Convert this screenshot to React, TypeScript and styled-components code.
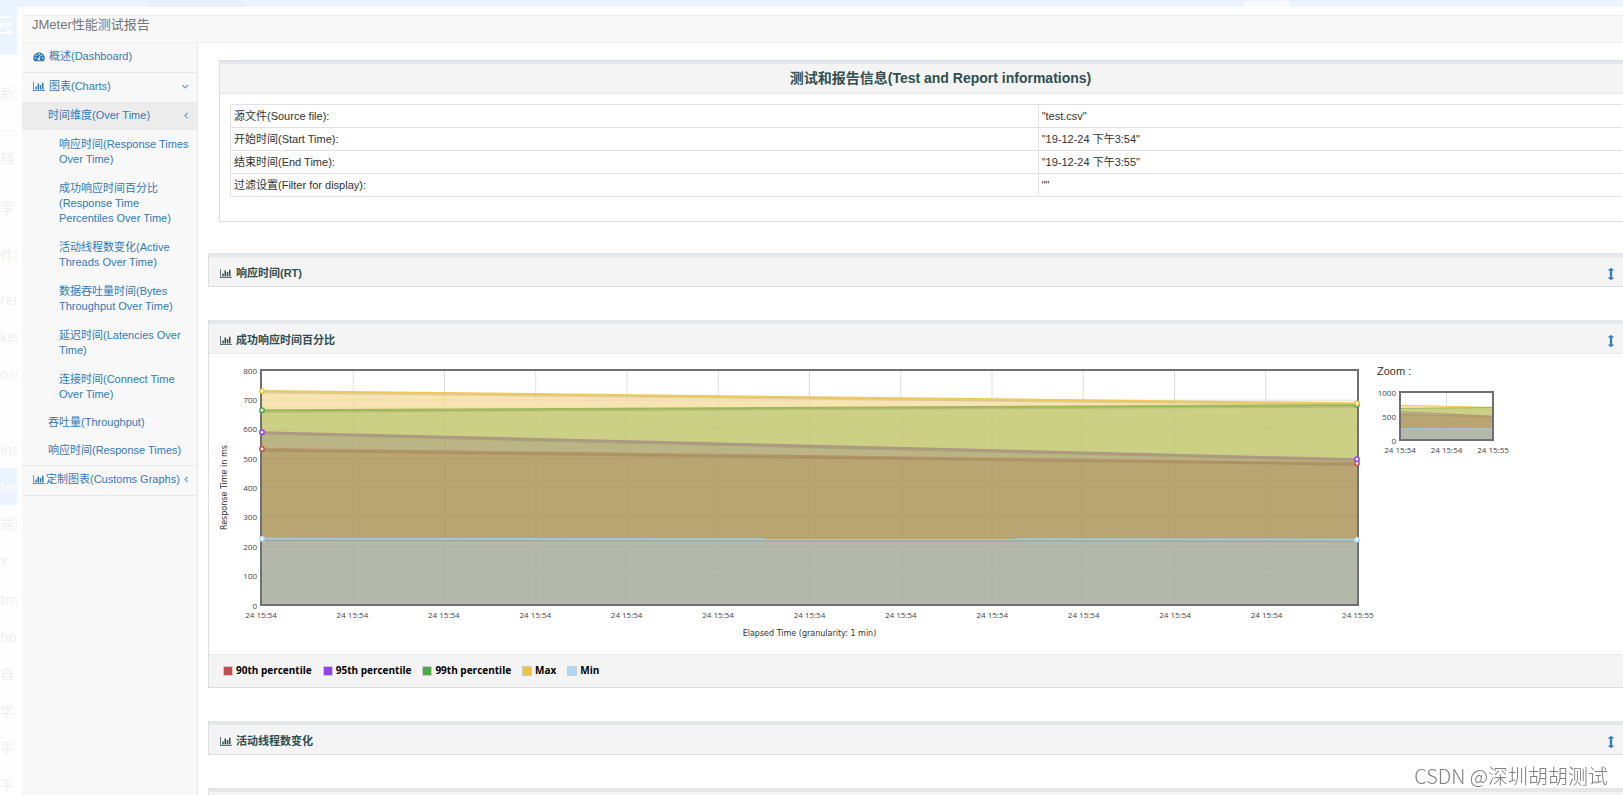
import React from "react";
import styled, { createGlobalStyle, css } from "styled-components";

const sans = `"Liberation Sans", "Noto Sans CJK SC", sans-serif`;
const small = `"Open Sans", "Noto Sans CJK SC", sans-serif`;

const GlobalStyle = createGlobalStyle`
  * { box-sizing: border-box; }
  html, body, #root { height: 100%; }
  body {
    margin: 0;
    overflow: hidden;
    background: #fefefe;
    font-family: ${sans};
    font-size: 11px;
    line-height: 15px;
    color: #333;
  }
`;

/* ---------- page frame ---------- */

const Page = styled.div`
  display: grid;
  grid-template-columns: 17px minmax(0, 1fr);
  grid-template-rows: 7px minmax(0, 1fr);
  height: 100vh;
  overflow: hidden;
`;

const TopStrip = styled.div`
  grid-column: 1 / -1;
  display: flex;
  justify-content: space-between;
  align-items: flex-end;
  padding: 0 332px 0 148px;
  background: #ebf4fe;
`;

const StripShade = styled.span`
  width: 95px;
  height: 7px;
  background: #e8f0fa;
`;

const StripTab = styled.span`
  width: 47px;
  height: 6px;
  border-radius: 6px 6px 0 0;
  background: #fafbfd;
`;

const Gutter = styled.nav`
  overflow: hidden;
  background: #fefefe;
  font-family: ${small};
  color: #eee;
`;

const GutterBrand = styled.div`
  height: 48px;
  overflow: hidden;
  background: #ebf4fe;
  color: #fff;
  font-size: 22px;
  line-height: 34px;
  text-indent: -8px;
`;

const GutterItem = styled.div<{ $height?: number; $active?: boolean }>`
  display: flex;
  align-items: center;
  height: ${(p) => p.$height ?? 37}px;
  white-space: nowrap;
  ${(p) =>
    p.$active &&
    css`
      background: #ebf4fe;
      color: #fff;
    `}
`;

const GutterGroup = styled.div<{ $ruled?: boolean }>`
  padding-bottom: 2px;
  font-size: 14px;
  border-bottom: ${(p) => (p.$ruled ? "1px solid #f7f7f7" : "0")};
`;

const Card = styled.div`
  display: flex;
  flex-direction: column;
  min-height: 0;
  padding: 8px 0 0 5px;
  background: #fff;
  border-top-left-radius: 4px;
`;

const Header = styled.header`
  flex: none;
  height: 28px;
  padding: 0 10px;
  background: #f8f8f8;
  border: solid #ededed;
  border-width: 1px 0;
`;

const Brand = styled.a`
  font-size: 13px;
  line-height: 18px;
  color: #777;
  text-decoration: none;
`;

const Columns = styled.div`
  display: flex;
  flex: 1;
  min-height: 0;
`;

/* ---------- sidebar ---------- */

const Sidebar = styled.nav`
  flex: none;
  width: 176px;
  background: #f8f8f8;
  border-right: 1px solid #e7e7e7;
`;

const NavSection = styled.div`
  border-bottom: 1px solid #e7e7e7;
`;

const navPadding = {
  1: "6px 7px 8px 11px",
  2: "6px 7px 7px 26px",
  3: "7px 7px 7px 37px",
};

const NavLink = styled.a<{ $level?: 1 | 2 | 3; $active?: boolean; $tight?: boolean }>`
  display: flex;
  align-items: center;
  gap: ${(p) => (p.$tight ? 1 : 4)}px;
  padding: ${(p) => navPadding[p.$level ?? 1]};
  background: ${(p) => (p.$active ? "#ececec" : "transparent")};
  color: #337ab7;
  text-decoration: none;
  white-space: ${(p) => (p.$level === 3 ? "normal" : "nowrap")};
`;

const NavText = styled.span`
  flex: 1;
  min-width: 0;
`;

/* ---------- main column ---------- */

const Main = styled.main`
  flex: 1;
  min-width: 0;
  padding: 17px 0 0 10px;
  overflow: hidden;
`;

const InfoPanel = styled.section`
  margin: 0 0 31px 11px;
  padding-bottom: 24px;
  border: solid #ddd;
  border-width: 1px 0 1px 1px;
`;

const InfoTitle = styled.h2`
  margin: 0;
  padding: 0 0 0 38px;
  border-top: 3px solid #e5e8eb;
  border-bottom: 1px solid #e7e7e7;
  background: #f4f4f4;
  color: #2f4f4f;
  font-size: 14px;
  line-height: 29px;
  text-align: center;
`;

const InfoTable = styled.table`
  width: calc(100% - 10px);
  margin: 10px 0 0 10px;
  border-collapse: collapse;
  border-left: 1px solid #ddd;

  th,
  td {
    height: 23px;
    padding: 0 3px;
    border: solid #e2e2e2;
    border-width: 1px 0 1px 1px;
    font-weight: 400;
    text-align: left;
  }
  th {
    width: 58%;
  }
`;

const Panel = styled.section`
  margin-bottom: 33px;
  border: solid #ddd;
  border-width: 0 0 1px 1px;
`;

const PanelHead = styled.header`
  display: flex;
  align-items: center;
  gap: 4px;
  height: 33px;
  padding: 4px 9px 0 11px;
  border-top: 4px solid #e5e8eb;
  background: #f4f4f4;
  color: #2f4f4f;
`;

const PanelTitle = styled.h3`
  flex: 1;
  margin: 0;
  font-size: 11px;
  font-weight: 700;
`;

const ToggleButton = styled.button`
  display: flex;
  padding: 0;
  border: 0;
  background: none;
  color: #337ab7;
  cursor: pointer;
`;

const PanelBody = styled.div`
  display: flex;
  height: 301px;
  padding-top: 15px;
  border-top: 1px solid #e7e7e7;
`;

const PanelFoot = styled.footer`
  display: flex;
  gap: 11px;
  height: 33px;
  padding: 8px 0 0 14px;
  border-top: 1px solid #e7e7e7;
  background: #f4f4f4;
`;

/* ---------- charts ---------- */

const ChartArea = styled.div`
  flex: 1;
  min-width: 0;
  display: grid;
  grid-template-columns: 14px 28px minmax(0, 1fr);
  grid-template-rows: 237px 18px 20px;
  padding-left: 9px;
`;

const AxisTitle = styled.div<{ $vertical?: boolean }>`
  font-family: "DejaVu Sans", sans-serif;
  font-size: 8px;
  line-height: 14px;
  text-align: center;
  color: #333;
  ${(p) =>
    p.$vertical
      ? css`
          writing-mode: vertical-rl;
          transform: rotate(180deg);
        `
      : css`
          grid-column: 3;
          align-self: center;
        `}
`;

const YLabels = styled.div`
  display: flex;
  flex-direction: column;
  justify-content: space-between;
  padding-right: 3px;
  font-family: ${small};
  font-size: 8px;
  text-align: right;
  color: #444;

  span {
    display: flex;
    align-items: center;
    justify-content: flex-end;
    height: 2px;
  }
`;

const XLabels = styled.div`
  grid-column: -2;
  display: flex;
  justify-content: space-between;
  font-family: ${small};
  font-size: 8px;
  line-height: 18px;
  color: #444;

  span {
    display: flex;
    justify-content: center;
    width: 2px;
    white-space: nowrap;
  }
`;

const PlotFrame = styled.div`
  border: 2px solid #707070;
`;

const PlotSvg = styled.svg`
  display: block;
  width: 100%;
  height: 100%;
  overflow: visible;
`;

const ZoomArea = styled.aside`
  flex: none;
  width: 264px;
  padding-left: 18px;
`;

const ZoomLabel = styled.div`
  height: 22px;
  line-height: 5px;
`;

const ZoomChart = styled.div`
  display: grid;
  grid-template-columns: 22px 95px;
  grid-template-rows: 50px 18px;
`;

const LegendItem = styled.span`
  display: flex;
  align-items: center;
  gap: 3px;
  height: 15px;
  font-family: ${small};
  font-size: 10px;
  font-weight: 700;
  color: #000;
`;

const Swatch = styled.i<{ $color: string }>`
  width: 10px;
  height: 10px;
  border: 1px solid #ccc;
  background: ${(p) => p.$color};
`;

const Watermark = styled.div`
  position: fixed;
  right: 15px;
  bottom: 5px;
  font-family: "Noto Sans CJK SC", sans-serif;
  font-size: 20px;
  font-weight: 300;
  line-height: 28px;
  color: #808080;
  text-shadow: 1px 1px 0 #fff;
`;

/* ---------- icons ---------- */

const BarIcon = () => (
  <svg width="12" height="11" viewBox="0 0 2048 1792" fill="currentColor" aria-hidden>
    <path d="M640 896v512h-256v-512h256zm384-512v1024h-256v-1024h256zm1024 1152v128h-2048v-1536h128v1408h1920zm-640-896v768h-256v-768h256zm384-384v1152h-256v-1152h256z" />
  </svg>
);

const GaugeIcon = () => (
  <svg width="12" height="11" viewBox="0 0 24 22" aria-hidden>
    <path d="M2.2 20A11.4 11.4 0 1 1 21.8 20Q21.4 20.6 20.7 20.6H3.3Q2.6 20.6 2.2 20Z" fill="currentColor" />
    <g fill="#f8f8f8">
      <circle cx="4.4" cy="14" r="1.5" />
      <circle cx="6.8" cy="8.6" r="1.5" />
      <circle cx="12" cy="6.2" r="1.5" />
      <circle cx="17.2" cy="8.6" r="1.5" />
      <circle cx="19.6" cy="14" r="1.5" />
      <circle cx="11.6" cy="16.4" r="2.3" />
    </g>
    <path d="M11.8 16 13.8 9.6" stroke="#f8f8f8" strokeWidth="1.6" strokeLinecap="round" />
  </svg>
);

const Chevron = ({ open }: { open?: boolean }) => (
  <svg width="8" height="8" viewBox="0 0 8 8" fill="none" stroke="#6f9fc9" strokeWidth="1.2" aria-hidden>
    <path d={open ? "M0.4 2 3.2 4.8 6 2" : "M5.6 1 3 3.6 5.6 6.2"} />
  </svg>
);

const ArrowsIcon = () => (
  <svg width="6" height="12" viewBox="560 0 672 1792" preserveAspectRatio="none" fill="currentColor" aria-hidden>
    <path d="M1216 320q0 26-19 45t-45 19h-128v1024h128q26 0 45 19t19 45-19 45l-256 256q-19 19-45 19t-45-19l-256-256q-19-19-19-45t19-45 45-19h128v-1024h-128q-26 0-45-19t-19-45 19-45l256-256q19-19 45-19t45 19l256 256q19 19 19 45z" />
  </svg>
);

/* ---------- data ---------- */

const overTime = [
  "响应时间(Response Times Over Time)",
  "成功响应时间百分比(Response Time Percentiles Over Time)",
  "活动线程数变化(Active Threads Over Time)",
  "数据吞吐量时间(Bytes Throughput Over Time)",
  "延迟时间(Latencies Over Time)",
  "连接时间(Connect Time Over Time)",
];

const info = [
  ["源文件(Source file):", '"test.csv"'],
  ["开始时间(Start Time):", '"19-12-24 下午3:54"'],
  ["结束时间(End Time):", '"19-12-24 下午3:55"'],
  ["过滤设置(Filter for display):", '""'],
];

type Series = { name: string; color: string; line: string; fill: string; from: number; to: number };

/* Drawn from the top of the stack down, so each area covers the one before. */
const series: Series[] = [
  { name: "Max", color: "#edc240", line: "#edc85a", fill: "#f8e4b2", from: 731, to: 689 },
  { name: "99th percentile", color: "#4da74d", line: "#9cbb58", fill: "#ccd085", from: 665, to: 683 },
  { name: "95th percentile", color: "#9440ed", line: "#ae9784", fill: "#bbb586", from: 590, to: 497 },
  { name: "90th percentile", color: "#cb4b4b", line: "#b59264", fill: "#b8a571", from: 532, to: 483 },
  { name: "Min", color: "#afd8f8", line: "#a4c9df", fill: "#b4b8aa", from: 224, to: 221 },
];

const legend = ["90th percentile", "95th percentile", "99th percentile", "Max", "Min"];

function Plot({ max, columns, rows, detailed }: { max: number; columns: number; rows: number; detailed?: boolean }) {
  const y = (v: number) => 100 - (v / max) * 100;
  const steps = (n: number) => Array.from({ length: n - 1 }, (_, i) => ((i + 1) / n) * 100);
  const grid = (stroke: string) => (
    <g stroke={stroke}>
      {steps(columns).map((x) => (
        <line key={`x${x}`} x1={`${x}%`} x2={`${x}%`} y1="0" y2="100%" />
      ))}
      {steps(rows).map((v) => (
        <line key={`y${v}`} x1="0" x2="100%" y1={`${v}%`} y2={`${v}%`} />
      ))}
    </g>
  );
  return (
    <PlotFrame>
      <PlotSvg role="img" aria-label="Response time percentiles">
        {grid("#e6e6e6")}
        <svg width="100%" height="100%" viewBox="0 0 100 100" preserveAspectRatio="none">
          {series.map((s) => (
            <polygon key={s.name} fill={s.fill} points={`0,${y(s.from)} 100,${y(s.to)} 100,100 0,100`} />
          ))}
        </svg>
        {grid("rgba(84,84,84,0.05)")}
        {series.map((s) => (
          <g key={s.name}>
            {detailed && (
              <line x1="0" x2="100%" y1={`${y(s.from) + 0.6}%`} y2={`${y(s.to) + 0.6}%`} stroke="rgba(0,0,0,0.1)" strokeWidth="2" />
            )}
            <line x1="0" x2="100%" y1={`${y(s.from)}%`} y2={`${y(s.to)}%`} stroke={s.line} strokeWidth={detailed ? 2 : 1} />
          </g>
        ))}
        {detailed &&
          [...series].reverse().map((s) => (
            <g key={s.name} fill="#fff" stroke={s.color} strokeWidth="1.5">
              <circle cx="0" cy={`${y(s.from)}%`} r="2.2" />
              <circle cx="100%" cy={`${y(s.to)}%`} r="2.2" />
            </g>
          ))}
      </PlotSvg>
    </PlotFrame>
  );
}

function PanelHeader({ title }: { title: string }) {
  return (
    <PanelHead>
      <BarIcon />
      <PanelTitle>{title}</PanelTitle>
      <ToggleButton type="button" aria-label={`展开 ${title}`}>
        <ArrowsIcon />
      </ToggleButton>
    </PanelHead>
  );
}

export default function App() {
  return (
    <>
      <GlobalStyle />
      <Page>
        <TopStrip>
          <StripShade />
          <StripTab />
        </TopStrip>
        <Gutter>
          <GutterBrand>云</GutterBrand>
          <GutterGroup $ruled>
            <GutterItem $height={74}>新文</GutterItem>
          </GutterGroup>
          <GutterGroup>
            <GutterItem $height={50}>档</GutterItem>
            <GutterItem $height={50}>享</GutterItem>
            <GutterItem $height={47}>件夹</GutterItem>
          </GutterGroup>
          <GutterGroup>
            {["rels", "ker", "ose", ""].map((t, i) => (
              <GutterItem key={i}>{t}</GutterItem>
            ))}
          </GutterGroup>
          <GutterGroup>
            <GutterItem>ins</GutterItem>
            <GutterItem $active>ter</GutterItem>
            <GutterItem>端资</GutterItem>
            <GutterItem>x</GutterItem>
          </GutterGroup>
          <GutterGroup>
            {["tm", "hor", "自", "学", "平", "平"].map((t, i) => (
              <GutterItem key={i}>{t}</GutterItem>
            ))}
          </GutterGroup>
        </Gutter>
        <Card>
          <Header>
            <Brand href="#">JMeter性能测试报告</Brand>
          </Header>
          <Columns>
            <Sidebar>
              <NavSection>
                <NavLink href="#dashboard">
                  <GaugeIcon />
                  <NavText>概述(Dashboard)</NavText>
                </NavLink>
              </NavSection>
              <NavSection>
                <NavLink href="#charts">
                  <BarIcon />
                  <NavText>图表(Charts)</NavText>
                  <Chevron open />
                </NavLink>
                <NavLink href="#over-time" $level={2} $active>
                  <NavText>时间维度(Over Time)</NavText>
                  <Chevron />
                </NavLink>
                {overTime.map((label) => (
                  <NavLink key={label} href="#over-time" $level={3}>
                    <NavText>{label}</NavText>
                  </NavLink>
                ))}
                <NavLink href="#throughput" $level={2}>
                  <NavText>吞吐量(Throughput)</NavText>
                </NavLink>
                <NavLink href="#response-times" $level={2}>
                  <NavText>响应时间(Response Times)</NavText>
                </NavLink>
              </NavSection>
              <NavSection>
                <NavLink href="#customs" $tight>
                  <BarIcon />
                  <NavText>定制图表(Customs Graphs)</NavText>
                  <Chevron />
                </NavLink>
              </NavSection>
            </Sidebar>
            <Main>
              <InfoPanel>
                <InfoTitle>测试和报告信息(Test and Report informations)</InfoTitle>
                <InfoTable>
                  <tbody>
                    {info.map(([label, value]) => (
                      <tr key={label}>
                        <th scope="row">{label}</th>
                        <td>{value}</td>
                      </tr>
                    ))}
                  </tbody>
                </InfoTable>
              </InfoPanel>
              <Panel>
                <PanelHeader title="响应时间(RT)" />
              </Panel>
              <Panel>
                <PanelHeader title="成功响应时间百分比" />
                <PanelBody>
                  <ChartArea>
                    <AxisTitle $vertical>Response Time in ms</AxisTitle>
                    <YLabels>
                      {[800, 700, 600, 500, 400, 300, 200, 100, 0].map((v) => (
                        <span key={v}>{v}</span>
                      ))}
                    </YLabels>
                    <Plot max={800} columns={12} rows={8} detailed />
                    <XLabels>
                      {Array.from({ length: 13 }, (_, i) => (
                        <span key={i}>{i === 12 ? "24 15:55" : "24 15:54"}</span>
                      ))}
                    </XLabels>
                    <AxisTitle>Elapsed Time (granularity: 1 min)</AxisTitle>
                  </ChartArea>
                  <ZoomArea>
                    <ZoomLabel>Zoom :</ZoomLabel>
                    <ZoomChart>
                      <YLabels>
                        {[1000, 500, 0].map((v) => (
                          <span key={v}>{v}</span>
                        ))}
                      </YLabels>
                      <Plot max={1000} columns={2} rows={2} />
                      <XLabels>
                        <span>24 15:54</span>
                        <span>24 15:54</span>
                        <span>24 15:55</span>
                      </XLabels>
                    </ZoomChart>
                  </ZoomArea>
                </PanelBody>
                <PanelFoot>
                  {legend.map((name) => (
                    <LegendItem key={name}>
                      <Swatch $color={series.find((s) => s.name === name)!.color} />
                      {name}
                    </LegendItem>
                  ))}
                </PanelFoot>
              </Panel>
              <Panel>
                <PanelHeader title="活动线程数变化" />
              </Panel>
              <Panel>
                <PanelHeader title="数据吞吐量时间" />
              </Panel>
            </Main>
          </Columns>
        </Card>
      </Page>
      <Watermark>CSDN @深圳胡胡测试</Watermark>
    </>
  );
}
